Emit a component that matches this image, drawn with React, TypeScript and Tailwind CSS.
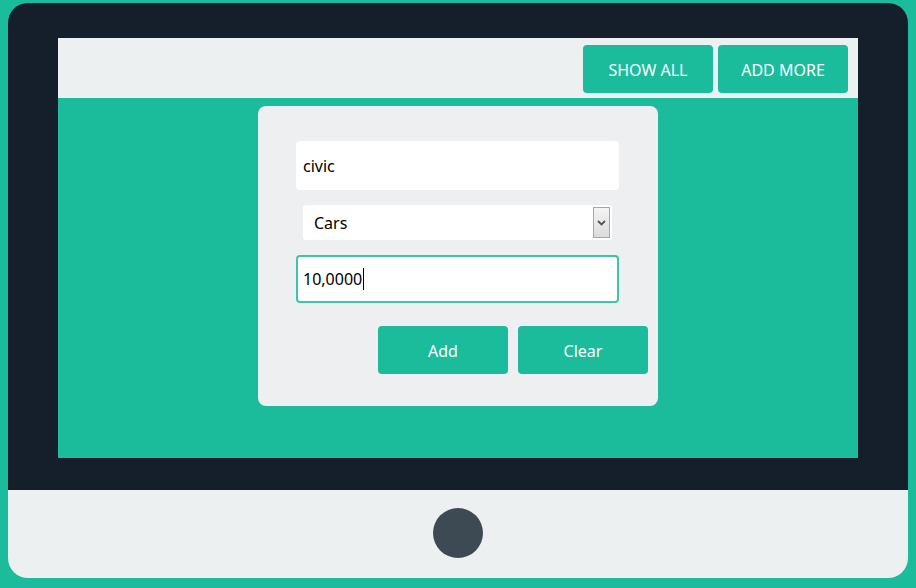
import React from "react";

export default function App() {
  const font = { fontFamily: '"Noto Sans", "Open Sans", sans-serif' };
  return (
    <div className="w-[916px] h-[588px] bg-[#1abc9c] pt-[3px] px-[8px]" style={font}>
      <div className="w-[900px] flex flex-col rounded-[20px] overflow-hidden">
        <div className="bg-[#141f2b] pt-[35px] pb-[32px] px-[50px]">
          <div className="w-[800px] h-[420px] flex flex-col bg-[#1abc9c]">
            <div className="h-[60px] bg-[#ecf0f1] flex justify-end items-start pt-[7px] pr-[10px] gap-[5px]">
              <button className="w-[130px] h-[48px] rounded-[4px] bg-[#1abc9c] text-white text-[16px] pt-[2px]">SHOW ALL</button>
              <button className="w-[130px] h-[48px] rounded-[4px] bg-[#1abc9c] text-white text-[16px] pt-[2px]">ADD MORE</button>
            </div>
            <div className="flex justify-center pt-[8px]">
              <div className="w-[400px] h-[300px] rounded-[8px] bg-[#eeeff1] flex flex-col pt-[35px] pl-[38px]">
                <div className="w-[323px] h-[49px] rounded-[4px] bg-white flex items-center pl-[7px] text-[16px] text-black">civic</div>
                <div className="mt-[15px] ml-[7px] w-[309px] h-[35px] rounded-[3px] bg-white flex items-center justify-between pl-[11px] pr-[2px] text-[16px] text-black">
                  <span className="pt-[1px]">Cars</span>
                  <div className="w-[17px] h-[31px] border border-[#a6a6a6] bg-gradient-to-b from-[#f4f4f4] to-[#dcdcdc] flex items-center justify-center">
                    <svg width="9" height="6" viewBox="0 0 9 6">
                      <path d="M1 1 L4.5 4.5 L8 1" stroke="#555" strokeWidth="1.8" fill="none" />
                    </svg>
                  </div>
                </div>
                <div className="mt-[15px] w-[323px] h-[48px] rounded-[4px] bg-white border-2 border-[#3cc5a8] flex items-center pl-[5px] text-[16px] text-black">
                  <span>10,0000</span>
                  <span className="w-[1px] h-[22px] bg-black ml-[1px]"></span>
                </div>
                <div className="mt-[23px] flex justify-end gap-[10px] pr-[10px]">
                  <button className="w-[130px] h-[48px] rounded-[4px] bg-[#1abc9c] text-white text-[16px] pt-[2px]">Add</button>
                  <button className="w-[130px] h-[48px] rounded-[4px] bg-[#1abc9c] text-white text-[16px] pt-[2px]">Clear</button>
                </div>
              </div>
            </div>
          </div>
        </div>
        <div className="h-[88px] bg-[#ecf0f1] flex justify-center pt-[18px]">
          <div className="w-[50px] h-[50px] rounded-full bg-[#3d4a54]"></div>
        </div>
      </div>
    </div>
  );
}
